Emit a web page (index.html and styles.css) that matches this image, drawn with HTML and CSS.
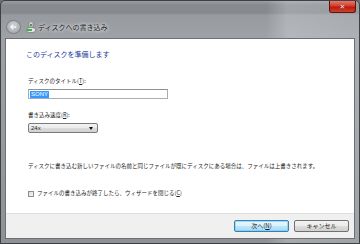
FILE: index.html
```html
<!DOCTYPE html>
<html lang="ja">
<head>
  <meta charset="UTF-8">
  <title>ディスクへの書き込み</title>
  <link rel="stylesheet" href="styles.css">
</head>
<body>
  <div class="window">
    <!-- Title Bar -->
    <div class="titlebar">
      <div class="title-group">
        <span class="back-btn">
          <svg width="15" height="14" viewBox="0 0 15 14">
            <path d="M10.5 7H4.5M7 4.5L4.5 7L7 9.5" fill="none" stroke="#f4f4f4" stroke-width="1.6"/>
          </svg>
        </span>
        <span class="app-icon">
          <svg width="10" height="11" viewBox="0 0 10 11">
            <rect x="3" y="0" width="4" height="5" fill="#d8d8d8" stroke="#777" stroke-width="0.6"/>
            <rect x="4" y="2" width="2" height="2" fill="#44a04a"/>
            <ellipse cx="5" cy="8" rx="4.5" ry="2.5" fill="#e8e8e8" stroke="#666" stroke-width="0.6"/>
            <rect x="1" y="7" width="5" height="2" fill="#3fb24a"/>
          </svg>
        </span>
        <span class="title-text">ディスクへの書き込み</span>
      </div>
      <button class="close-btn">✕</button>
    </div>

    <!-- Client Area -->
    <div class="client">
      <div class="content">
        <h1 class="main-title">このディスクを準備します</h1>

        <label class="field-label">ディスクのタイトル(<u>T</u>):</label>
        <div class="text-box"><span class="selected">SONY</span></div>

        <label class="field-label speed-label">書き込み速度(<u>R</u>):</label>
        <div class="dropdown">
          <span>24x</span>
          <span class="arrow"></span>
        </div>

        <p class="note">ディスクに書き込む新しいファイルの名前と同じファイルが既にディスクにある場合は、ファイルは上書きされます。</p>

        <div class="check-row">
          <span class="check-box"></span>
          <span>ファイルの書き込みが終了したら、ウィザードを閉じる(<u>C</u>)</span>
        </div>
      </div>

      <!-- Button Strip -->
      <div class="footer">
        <button class="btn btn-default">次へ(<u>N</u>)</button>
        <button class="btn">キャンセル</button>
      </div>
    </div>
  </div>
</body>
</html>
```

FILE: styles.css
```css
/* Reset */
* {
  margin: 0;
  padding: 0;
  box-sizing: border-box;
}

body {
  width: 360px;
  height: 244px;
  overflow: hidden;
  font-family: "Noto Sans CJK JP", "Noto Sans", sans-serif;
  color: #1e1e1e;
  background: #6e7276;
}

/* Aero window frame */
.window {
  display: flex;
  flex-direction: column;
  width: 360px;
  height: 244px;
  padding-bottom: 4px;
  border: 1px solid #3e4144;
  border-radius: 5px 5px 0 0;
  background:
    linear-gradient(90deg, rgba(255, 255, 255, 0) 0%, rgba(255, 255, 255, 0) 74%, rgba(255, 255, 255, 0.22) 80%, rgba(255, 255, 255, 0.15) 100%),
    linear-gradient(180deg, #9a9ea2 0px, #878b90 4px, #868a8f 12px, #979ba0 14px, #9ea2a7 36px, #8e9296 100%);
}

/* Title Bar */
.titlebar {
  display: flex;
  align-items: flex-start;
  height: 37px;
}

.title-group {
  display: flex;
  align-items: center;
  padding: 19px 0 0 5px;
}

.back-btn {
  display: flex;
  align-items: center;
  justify-content: center;
  width: 15px;
  height: 14px;
  border-radius: 50%;
  border: 1px solid #808386;
  background: radial-gradient(circle at 50% 35%, #d0d2d4 0%, #b2b5b8 60%, #9da0a3 100%);
}

.app-icon {
  display: flex;
  margin-left: 5px;
}

.title-text {
  margin-left: 2px;
  font-size: 7px;
  line-height: 9px;
  color: #1a1a1a;
  text-shadow: 0 0 3px rgba(255, 255, 255, 0.95), 0 0 5px rgba(255, 255, 255, 0.7);
}

.close-btn {
  margin: 0 3px 0 auto;
  width: 27px;
  height: 12px;
  border: 1px solid #5e140e;
  border-top: none;
  border-radius: 0 0 3px 3px;
  background: linear-gradient(180deg, #e8786a 0%, #d43c2c 45%, #b81a0c 55%, #d2402f 100%);
  color: #f2f2f2;
  font-size: 7px;
  line-height: 10px;
  font-weight: bold;
  text-shadow: 0 0 1px #5a0000;
  font-family: "DejaVu Sans", sans-serif;
}

/* Client Area */
.client {
  flex: 1;
  display: flex;
  flex-direction: column;
  margin: 0 4px;
  border: 1px solid #6c7074;
  background: #ffffff;
}

.content {
  flex: 1;
  display: flex;
  flex-direction: column;
  align-items: flex-start;
  padding: 11px 22px 0;
  font-size: 5.5px;
  line-height: 7px;
}

.main-title {
  margin-left: -2px;
  font-size: 7px;
  line-height: 9px;
  font-weight: normal;
  color: #1c3a9e;
}

.field-label {
  margin-top: 19px;
  color: #222;
}

.field-label u,
.check-row u,
.btn u {
  text-decoration: underline;
}

.speed-label {
  margin-top: 13px;
}

.text-box {
  display: flex;
  align-items: center;
  margin-top: 4px;
  width: 140px;
  height: 10px;
  padding-left: 1px;
  border: 1px solid #abadb3;
  border-top-color: #8e9093;
}

.selected {
  background: #3399ff;
  color: #ffffff;
  font-size: 6px;
  line-height: 7px;
  padding: 0 1px;
  font-family: "Liberation Sans", sans-serif;
}

.dropdown {
  display: flex;
  align-items: center;
  justify-content: space-between;
  margin-top: 4px;
  width: 70px;
  height: 10px;
  padding: 0 4px 0 2px;
  border: 1px solid #7a7a7a;
  border-radius: 2px;
  background: linear-gradient(180deg, #f3f3f3 0%, #ebebeb 50%, #dcdcdc 51%, #d2d2d2 100%);
  font-family: "Liberation Sans", sans-serif;
  font-size: 6px;
}

.arrow {
  border-left: 2.5px solid transparent;
  border-right: 2.5px solid transparent;
  border-top: 3px solid #111;
}

.note {
  margin-top: 30px;
  color: #222;
}

.check-row {
  display: flex;
  align-items: center;
  gap: 3px;
  margin-top: 20px;
  color: #222;
}

.check-box {
  width: 6px;
  height: 6px;
  border: 1px solid #8e8f8f;
  background: linear-gradient(135deg, #dcdcdc 0%, #f6f6f6 100%);
}

/* Button Strip */
.footer {
  display: flex;
  justify-content: flex-end;
  align-items: center;
  gap: 5px;
  height: 25px;
  padding: 0 5px 1px 0;
  border-top: 1px solid #dfdfdf;
  background: #f0f0f0;
}

.btn {
  width: 55px;
  height: 12px;
  border: 1px solid #707070;
  border-radius: 2px;
  background: linear-gradient(180deg, #f2f2f2 0%, #ebebeb 50%, #dddddd 51%, #cfcfcf 100%);
  font-family: "Noto Sans CJK JP", sans-serif;
  font-size: 6px;
  line-height: 10px;
  color: #1a1a1a;
}

.btn-default {
  border-color: #3c7fb1;
  background: linear-gradient(180deg, #eaf6fd 0%, #d9f0fc 50%, #bee6fd 51%, #a7d9f5 100%);
  box-shadow: inset 0 0 0 1px rgba(110, 200, 240, 0.6);
}
```
